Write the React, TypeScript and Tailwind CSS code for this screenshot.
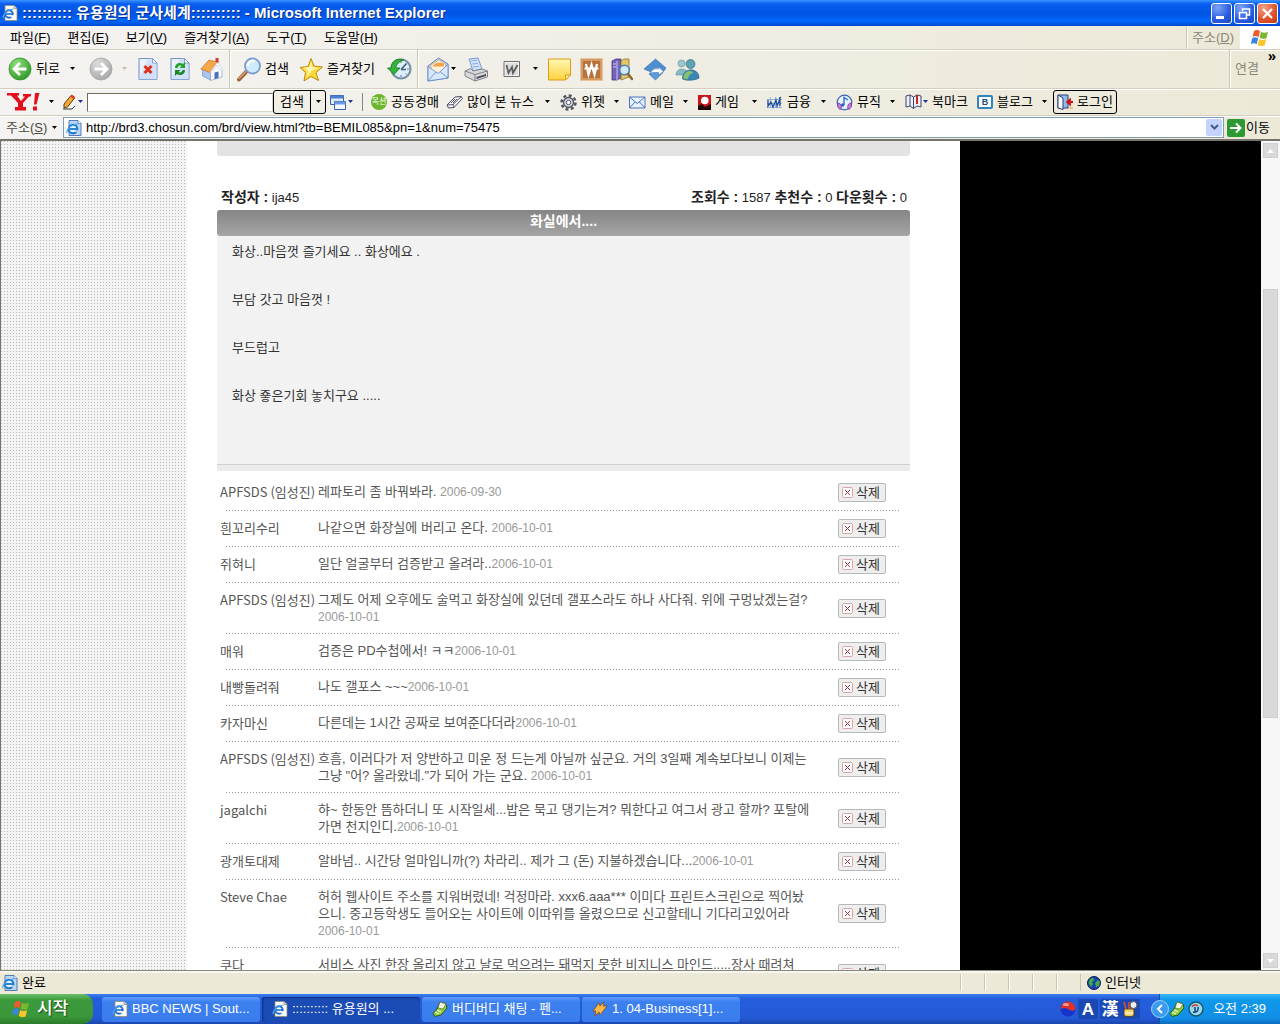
import React from "react";

type IconProps = { className?: string };

const Caret = ({ className = "text-black" }: IconProps) => (
  <svg width="7" height="4" viewBox="0 0 7 4" className={`shrink-0 ${className}`} aria-hidden="true">
    <path d="M1 0h5L3.500 3z" fill="currentColor" />
  </svg>
);

const IePage = ({ className = "size-4" }: IconProps) => (
  <svg viewBox="0 0 16 16" className={`shrink-0 ${className}`} aria-hidden="true">
    <path d="M3 .5h9l3 3v12H3z" fill="#fdfdf6" stroke="#8d8b78" strokeWidth=".8" />
    <path d="M12 .5v3h3" fill="#d8d6c6" stroke="#8d8b78" strokeWidth=".7" />
    <circle cx="7" cy="9" r="3.700" fill="none" stroke="#1f6fd6" strokeWidth="2" />
    <path d="M4 9h6.500" stroke="#1f6fd6" strokeWidth="1.600" />
    <path d="M8.500 10.200h4v2h-4z" fill="#fdfdf6" />
    <path d="M1.500 13C0 11 5 4.500 11.500 4" fill="none" stroke="#54a4ef" strokeWidth="1.200" />
  </svg>
);

const IeBlue = ({ className = "size-4" }: IconProps) => (
  <svg viewBox="0 0 16 16" className={`shrink-0 ${className}`} aria-hidden="true">
    <path d="M3 .5h9l3 3v12H3z" fill="#b9d6f7" stroke="#4870ad" strokeWidth=".9" />
    <path d="M12 .5v3h3" fill="#fff" stroke="#4870ad" strokeWidth=".7" />
    <circle cx="7" cy="9" r="4.300" fill="#e6f5ff" stroke="#1878cc" strokeWidth="2" />
    <path d="M3.500 9h7" stroke="#1878cc" strokeWidth="1.800" />
    <path d="M9 10.300h4v1.800H9z" fill="#b9d6f7" />
    <path d="M1 13C0 10 5 4 12 4" fill="none" stroke="#4aa3ec" strokeWidth="1.200" />
  </svg>
);

const ArrowDisc = ({ back, id, light, dark }: { back?: boolean; id: string; light: string; dark: string }) => (
  <svg width="24" height="24" viewBox="0 0 24 24" className="shrink-0" aria-hidden="true">
    <defs>
      <radialGradient id={id} cx=".35" cy=".25" r=".85">
        <stop offset="0" stopColor={light} />
        <stop offset="1" stopColor={dark} />
      </radialGradient>
    </defs>
    <circle cx="12" cy="12" r="11" fill={`url(#${id})`} stroke={dark} strokeWidth=".8" />
    <g transform={back ? undefined : "matrix(-1 0 0 1 24 0)"}>
      <path d="M18.500 12H7M12 6l-6 6 6 6" fill="none" stroke="#fff" strokeWidth="2.800" />
    </g>
  </svg>
);

const Doc = ({ children }: { children: React.ReactNode }) => (
  <svg width="20" height="24" viewBox="0 0 20 24" className="shrink-0" aria-hidden="true">
    <path d="M1 1.500h13.500L19 6v16.500H1z" fill="#e9f1fd" stroke="#6d8fcb" />
    <path d="M10 1.500h4.500L19 6v16.500H1z" fill="#c3d7f6" opacity=".6" />
    <path d="M14.500 1.500V6H19z" fill="#fff" stroke="#6d8fcb" strokeWidth=".8" />
    {children}
  </svg>
);

const Home = () => (
  <svg width="24" height="24" viewBox="0 0 24 24" className="shrink-0" aria-hidden="true">
    <path d="M2.500 12l8 2.500v8.500l-8-4z" fill="#a9c5f0" stroke="#6486c4" strokeWidth=".6" />
    <path d="M10.500 15L17 6.500l5 7V20l-11.500 3.500z" fill="#f7f9ff" stroke="#8297c8" strokeWidth=".6" />
    <path d="M14.500 15.500l4-1v6.500l-4 1.300z" fill="#4a71bd" />
    <path d="M.8 12L9 3l8.500 2L10 15.500z" fill="#f6a64a" stroke="#c8732a" strokeWidth=".7" />
    <path d="M17.500 5l6 8.500-1.500 1L17 8l-6 8-1-.8z" fill="#fff" stroke="#a9b4cd" strokeWidth=".5" />
    <path d="M15.500 1h3v5l-3-1.500z" fill="#cf3b2b" />
  </svg>
);

const Magnifier = () => (
  <svg width="25" height="25" viewBox="0 0 25 25" className="shrink-0" aria-hidden="true">
    <path d="M9.500 14.500l-7.500 8" stroke="#9a5f35" strokeWidth="4" strokeLinecap="round" />
    <path d="M9 14.500l-7 7" stroke="#d9a173" strokeWidth="1.500" strokeLinecap="round" />
    <circle cx="15.500" cy="9" r="7.500" fill="#cfeafc" stroke="#7b9bcf" strokeWidth="1.800" />
    <path d="M10.500 9a5.500 5.500 0 0 1 7-5" stroke="#fff" strokeWidth="2.500" fill="none" />
  </svg>
);

const Star = () => (
  <svg width="25" height="25" viewBox="0 0 25 25" className="shrink-0" aria-hidden="true">
    <path d="M12 1.500l3 7.500 8.500 1-6.500 5.500 2.500 8-7.500-4-7 4.500 1.500-8.500L1 10.500l8-1z" fill="#ffd83a" stroke="#b98a12" strokeWidth="1" strokeLinejoin="round" />
    <path d="M12 4l1.500 6 6 1-7 3-5 6 1.500-6-4-3.500 5.500-.5z" fill="#fff6b0" />
  </svg>
);

const History = () => (
  <svg width="25" height="24" viewBox="0 0 25 24" className="shrink-0" aria-hidden="true">
    <circle cx="14" cy="12" r="9.500" fill="#dceef9" stroke="#7c93a6" strokeWidth="2.200" />
    <path d="M14 12.500l5.500-6M14 12.500h5" stroke="#42607a" strokeWidth="1.600" />
    <path d="M14 4v2M22 12h-2M14 20v-2M19.500 17.500l-1-1" stroke="#5b7b95" />
    <path d="M17 3C10 .5 4.500 4 4 11H.5l6.500 6.500L13 11H9c0-3.500 3-6.500 8-8z" fill="#35b13d" stroke="#13771c" strokeWidth=".8" />
  </svg>
);

const MailOpen = () => (
  <svg width="24" height="25" viewBox="0 0 24 25" className="shrink-0" aria-hidden="true">
    <path d="M2 9L12.500 1 22 7v14L2 24z" fill="#bcd6f7" stroke="#5e88c7" />
    <path d="M5 8l8-5 6.500 4v7L12 17l-7-4z" fill="#fff3dc" stroke="#e0a765" strokeWidth=".8" />
    <path d="M7 8.500c3-3 7-4 11-2v3H7z" fill="#f4a14f" />
    <path d="M2 9.500l10 7 10-9V21L2 24z" fill="#d9e8fc" stroke="#5e88c7" strokeWidth=".8" />
    <path d="M2 24l8-9M22 21l-8-6.500" stroke="#5e88c7" strokeWidth=".8" />
  </svg>
);

const Printer = () => (
  <svg width="25" height="25" viewBox="0 0 25 25" className="shrink-0" aria-hidden="true">
    <path d="M5 2l9-1 4 11-9 2z" fill="#cfe2fb" stroke="#6e92cd" strokeWidth=".9" />
    <path d="M7 4l6-.7M8 7l6-.7M9 10l6-.7" stroke="#8faede" />
    <path d="M1 14l6-2.500 2 2.500 9-2 5.500 2v6L11 24 1 19z" fill="#d8d8dc" stroke="#77787f" strokeWidth=".9" />
    <path d="M1 14l10 3.500 12.500-3.500M11 17.500V24" fill="none" stroke="#77787f" strokeWidth=".9" />
    <path d="M12.500 20l9.500-3v2l-9.500 3z" fill="#4d4e55" />
  </svg>
);

const WordDoc = () => (
  <svg width="18" height="18" viewBox="0 0 18 18" className="shrink-0" aria-hidden="true">
    <path d="M1 1.500h15.500v15H1z" fill="#f5f5f5" stroke="#6f6f6f" />
    <path d="M2.500 3h12.500v12H2.500z" fill="#dedede" />
    <path d="M3.500 5l2 8 3.500-6 1 6 4.500-8" fill="none" stroke="#5e5e5e" strokeWidth="1.800" />
  </svg>
);

const Note = () => (
  <svg width="23" height="23" viewBox="0 0 23 23" className="shrink-0" aria-hidden="true">
    <defs>
      <linearGradient id="note" x1="0" y1="0" x2="0" y2="1">
        <stop offset="0" stopColor="#fff7b5" />
        <stop offset="1" stopColor="#ffd23e" />
      </linearGradient>
    </defs>
    <path d="M.5 1h22v16l-5 5H.5z" fill="url(#note)" stroke="#d99d17" />
    <path d="M22.500 17h-5v5z" fill="#fff2a0" stroke="#d99d17" />
  </svg>
);

const Won = () => (
  <svg width="23" height="23" viewBox="0 0 23 23" className="shrink-0" aria-hidden="true">
    <path d="M.5.5h22v22H.5z" fill="#d39a66" stroke="#e9c49c" />
    <path d="M3 3h17v17H3z" fill="#b8733c" />
    <path d="M6 6l2.500 10.500 3-10 3 10L17 6M4.500 10.500h14" fill="none" stroke="#fff" strokeWidth="2.200" />
  </svg>
);

const Books = () => (
  <svg width="22" height="23" viewBox="0 0 22 23" className="shrink-0" aria-hidden="true">
    <path d="M1 3l4-2h5v19l-4 2H1z" fill="#7463b8" stroke="#40357c" strokeWidth=".8" />
    <path d="M6 3v19M2 6h3M2 9h3" stroke="#cfc6f0" />
    <path d="M10 3l3-2 5 0v18l-8 3z" fill="#e5c766" stroke="#8d7428" strokeWidth=".8" />
    <circle cx="13.500" cy="12" r="4.800" fill="#cfe9fb" stroke="#4b7ebc" strokeWidth="1.600" />
    <path d="M17 16l4 5" stroke="#8a682d" strokeWidth="2.500" strokeLinecap="round" />
  </svg>
);

const Diamond = () => (
  <svg width="24" height="23" viewBox="0 0 24 23" className="shrink-0" aria-hidden="true">
    <path d="M12.500 1L23 10l-2.500 3.500L16 9l-5 1-3 4-7-3z" fill="#4f8fd0" stroke="#2f6caf" strokeWidth=".6" />
    <path d="M9 14l3-3h4v3.500h4L12.500 22 6 16z" fill="#5e9bd8" stroke="#2f6caf" strokeWidth=".6" />
    <path d="M7.500 15c1-3 4-5 8-4v-2l5 4.500-5 3.500v-2.500c-3 0-5 0-8 .5z" fill="#fff" stroke="#3c78bb" strokeWidth=".6" />
  </svg>
);

const People = () => (
  <svg width="25" height="23" viewBox="0 0 25 23" className="shrink-0" aria-hidden="true">
    <circle cx="6.500" cy="5.500" r="3.500" fill="#9cc6ce" stroke="#5f9099" strokeWidth=".6" />
    <path d="M1 17c0-8 12-8 12 0z" fill="#86b9c4" stroke="#5f9099" strokeWidth=".6" />
    <path d="M7.500 21c0-12 16.500-12 16.500-1-4 2.500-12 3-16.500 1z" fill="#3b86b4" stroke="#2a6389" strokeWidth=".7" />
    <path d="M8.500 20.500c0-8 7-9 10-6-3 1-5 3-6 7z" fill="#82c46f" />
    <circle cx="15.500" cy="6" r="4.500" fill="#5ea3b4" stroke="#336f86" strokeWidth=".7" />
  </svg>
);

const Yahoo = () => (
  <svg width="34" height="20" viewBox="0 0 34 20" className="shrink-0" aria-hidden="true">
    <path d="M0 1h12v2.500h-2l4 5.500 4-4.500h-2V2h8v2.500h-2L16 11v4h3v3.500H8V15h3v-4L4 3.500H0z" fill="#e3101b" />
    <path d="M28 1h4.500l-3 11.500h-2.500zM26 14.500h4v4h-4z" fill="#e3101b" />
  </svg>
);

const Pencil = () => (
  <svg width="15" height="16" viewBox="0 0 15 16" className="shrink-0" aria-hidden="true">
    <path d="M2 10l7-8.500 3.500 2.500-7 9L2 14z" fill="#f6a632" stroke="#5b3a10" />
    <path d="M9 1.500L12.500 4" stroke="#d83b2b" strokeWidth="2.500" />
    <path d="M1 15h9l3-3" stroke="#333" fill="none" />
  </svg>
);

const Panes = () => (
  <svg width="16" height="15" viewBox="0 0 16 15" className="shrink-0" aria-hidden="true">
    <path d="M.5.5h13v9H.5z" fill="#dfeafc" stroke="#3a62ad" />
    <path d="M.5.5h13v3H.5z" fill="#4f7fd3" />
    <path d="M4.500 6.500h11v8h-11z" fill="#f3f8ff" stroke="#3a62ad" />
    <path d="M4.500 6.500h11v3h-11z" fill="#6f9be4" />
  </svg>
);

const Auction = () => (
  <span className="flex size-4 shrink-0 items-center justify-center rounded-full bg-[#6cb52d] text-[8px] leading-none text-white">옥션</span>
);

const Eraser = () => (
  <svg width="17" height="15" viewBox="0 0 17 15" className="shrink-0" aria-hidden="true">
    <path d="M1 10l8-8 6-.5 1.500 2-8.500 9-5.500.5z" fill="#f1f1f6" stroke="#4d4d63" />
    <path d="M1 10l6-.5 8.500-8M7 9.500l1 3M5 8l4-4M7 8l4-4" fill="none" stroke="#4d4d63" strokeWidth=".9" />
  </svg>
);

const Gear = () => (
  <svg width="17" height="17" viewBox="0 0 17 17" className="shrink-0" aria-hidden="true">
    <circle cx="8.500" cy="8.500" r="7" fill="none" stroke="#50565f" strokeWidth="2.500" strokeDasharray="3 2.500" />
    <circle cx="8.500" cy="8.500" r="5" fill="#cfd6dd" stroke="#50565f" strokeWidth="1.300" />
    <circle cx="8.500" cy="8.500" r="2.200" fill="#fff" stroke="#50565f" />
  </svg>
);

const Envelope = () => (
  <svg width="17" height="13" viewBox="0 0 17 13" className="shrink-0" aria-hidden="true">
    <path d="M.5 1h15.500v11H.5z" fill="#e8f2ff" stroke="#4a73c0" />
    <path d="M.5 1l7.700 6.500L16 1M.5 12L6 6M16 12l-5.500-6" fill="none" stroke="#4a73c0" />
  </svg>
);

const Game = () => (
  <svg width="13" height="15" viewBox="0 0 13 15" className="shrink-0" aria-hidden="true">
    <path d="M0 0h13v15H0z" fill="#c8141e" />
    <path d="M0 15v-4l4-2 3 3 6-3v6z" fill="#200505" />
    <circle cx="6.800" cy="5.500" r="3.800" fill="#fff" />
  </svg>
);

const Finance = () => (
  <svg width="16" height="13" viewBox="0 0 16 13" className="shrink-0" aria-hidden="true">
    <path d="M0 3.500h15M0 7.500h15M0 11.500h15M3.500 1v11M8.500 1v11M12.500 1v11" stroke="#8fb3dd" />
    <path d="M1 4v6l3-4 2 5 3-7 1 6 3-7v7M12 3l2-2" fill="none" stroke="#1d4e9c" strokeWidth="1.300" />
  </svg>
);

const Music = () => (
  <svg width="17" height="17" viewBox="0 0 17 17" className="shrink-0" aria-hidden="true">
    <circle cx="8.500" cy="8.500" r="7.300" fill="#eaf2ff" stroke="#3d62b8" strokeWidth="1.200" />
    <path d="M8 11V3.500l4 2.500" fill="none" stroke="#1c66c9" strokeWidth="1.300" />
    <circle cx="6.700" cy="11" r="1.700" fill="#1c66c9" />
    <path d="M2 9c4 0 4 6 2 6.500C2 14 1 12 2 9zM15 9c-4 0-4 6-2 6.500 2-1.500 3-3.500 2-6.500z" fill="#c47be0" stroke="#7634a0" strokeWidth=".8" />
  </svg>
);

const Bookmark = () => (
  <svg width="17" height="16" viewBox="0 0 17 16" className="shrink-0" aria-hidden="true">
    <path d="M1 2l4-1 3.500 2L12 1l4 1v11l-4-1-3.500 2.500L5 12l-4 1z" fill="#eef1f8" stroke="#3a4570" />
    <path d="M8.500 3v11.500M5 1v11" stroke="#3a4570" />
    <path d="M12 1v9" stroke="#c8261f" strokeWidth="2" />
  </svg>
);

const Blog = () => (
  <span className="flex h-[14px] w-4 shrink-0 items-center justify-center rounded-[2px] border-2 border-[#2f86bf] bg-white text-[9px] leading-none font-bold text-[#1d4f7c]">B</span>
);

const Door = () => (
  <svg width="17" height="16" viewBox="0 0 17 16" className="shrink-0" aria-hidden="true">
    <path d="M1 1h10v13H1z" fill="#8ebdf0" stroke="#2c3f77" />
    <path d="M1 1l5 3v11.500L1 14z" fill="#fff" stroke="#2c3f77" />
    <path d="M16 8h-4M13 5.500L10 8l3 2.500z" stroke="#d21414" strokeWidth="1.800" fill="#d21414" />
    <path d="M11 14h5" stroke="#d8a14c" />
  </svg>
);

const WindowsFlag = ({ className = "h-[18px] w-5" }: IconProps) => (
  <svg viewBox="0 0 20 18" className={`shrink-0 ${className}`} aria-hidden="true">
    <path d="M4 2c2-1.500 4-1.500 6 .2L8.500 8.200c-2-1.500-4-1.500-6-.2z" fill="#f0592a" />
    <path d="M11 2.700c2 1.300 4.500 1.500 7 0L16.500 9c-2.500 1.300-4.800 1-7-.2z" fill="#77b82f" />
    <path d="M2.200 9.200c2-1.400 4-1.400 6 0L6.700 15.300c-2-1.500-4-1.300-6 0z" fill="#3a86dd" />
    <path d="M9.200 9.900c2 1.300 4.500 1.500 7 0l-1.500 6.300c-2.500 1.300-5 1-7-.3z" fill="#fbc62a" />
  </svg>
);

const Globe = () => (
  <svg width="14" height="14" viewBox="0 0 14 14" className="shrink-0" aria-hidden="true">
    <circle cx="7" cy="7" r="6.500" fill="#1b3fae" stroke="#0b1c55" />
    <path d="M3 3l3-1.500L7.500 4 5 6l1 2-2 3-2.500-4zM8 7l3-3 2 2-1 4-3 1z" fill="#3fae4a" />
  </svg>
);

const Shoe = () => (
  <svg width="16" height="16" viewBox="0 0 16 16" className="shrink-0" aria-hidden="true">
    <path d="M8 1l6 2 1 4-6 7-6 1.500-2-3L5 8z" fill="#8fce3a" stroke="#2f5a10" />
    <path d="M8 1l6 2-3 5-5-1z" fill="#f3f7e4" stroke="#56703a" strokeWidth=".7" />
    <path d="M3 11l4 2M5 9l4 2" stroke="#fff" />
  </svg>
);

const Bolt = () => (
  <svg width="16" height="16" viewBox="0 0 16 16" className="shrink-0" aria-hidden="true">
    <path d="M1 10l6-8 1 3 4-4-1 4 4 0-7 9-1-3-4 4 1-5z" fill="#ffb84a" stroke="#8d4a0a" strokeWidth=".8" />
  </svg>
);

const UI_FONT = "font-['Liberation_Sans','Noto_Sans_CJK_KR',sans-serif]";

const menus: [string, string][] = [
  ["파일", "F"],
  ["편집", "E"],
  ["보기", "V"],
  ["즐겨찾기", "A"],
  ["도구", "T"],
  ["도움말", "H"],
];

const links: { icon: React.ReactNode; label: string; width: string; caret: boolean }[] = [
  { icon: <Auction />, label: "공동경매", width: "w-[75px]", caret: false },
  { icon: <Eraser />, label: "많이 본 뉴스", width: "w-[114px]", caret: true },
  { icon: <Gear />, label: "위젯", width: "w-[69px]", caret: true },
  { icon: <Envelope />, label: "메일", width: "w-[69px]", caret: true },
  { icon: <Game />, label: "게임", width: "w-[69px]", caret: true },
  { icon: <Finance />, label: "금융", width: "w-[69px]", caret: true },
  { icon: <Music />, label: "뮤직", width: "w-[69px]", caret: true },
];

const comments: { name: string; lines: string[]; date?: string; dateBelow?: boolean }[] = [
  { name: "APFSDS (임성진)", lines: ["레파토리 좀 바꿔봐라. "], date: "2006-09-30" },
  { name: "흰꼬리수리", lines: ["나같으면 화장실에 버리고 온다. "], date: "2006-10-01" },
  { name: "쥐혀니", lines: ["일단 얼굴부터 검증받고 올려라.."], date: "2006-10-01" },
  { name: "APFSDS (임성진)", lines: ["그제도 어제 오후에도 술먹고 화장실에 있던데 갤포스라도 하나 사다줘. 위에 구멍났겠는걸?"], date: "2006-10-01", dateBelow: true },
  { name: "매워", lines: ["검증은 PD수첩에서! ㅋㅋ"], date: "2006-10-01" },
  { name: "내빵돌려줘", lines: ["나도 갤포스 ~~~"], date: "2006-10-01" },
  { name: "카자마신", lines: ["다른데는 1시간 공짜로 보여준다더라"], date: "2006-10-01" },
  { name: "APFSDS (임성진)", lines: ["흐흠, 이러다가 저 양반하고 미운 정 드는게 아닐까 싶군요. 거의 3일째 계속보다보니 이제는", "그냥 \"어? 올라왔네.\"가 되어 가는 군요. "], date: "2006-10-01" },
  { name: "jagalchi", lines: ["햐~ 한동안 뜸하더니 또 시작일세...밥은 묵고 댕기는겨? 뭐한다고 여그서 광고 할까? 포탈에", "가면 천지인디."], date: "2006-10-01" },
  { name: "광개토대제", lines: ["알바넘.. 시간당 얼마입니까(?) 차라리.. 제가 그 (돈) 지불하겠습니다..."], date: "2006-10-01" },
  { name: "Steve Chae", lines: ["허허 웹사이트 주소를 지워버렸네! 걱정마라. xxx6.aaa*** 이미다 프린트스크린으로 찍어놨", "으니. 중고등학생도 들어오는 사이트에 이따위를 올렸으므로 신고할테니 기다리고있어라"], date: "2006-10-01", dateBelow: true },
  { name: "쿠다", lines: ["서비스 사진 한장 올리지 않고 날로 먹으려는 돼먹지 못한 비지니스 마인드.....장사 때려쳐", "\u00a0"] },
];

const Rule = () => <div className="h-full w-[2px] shrink-0 border-r border-l border-r-white border-l-[#cbc7b4]" />;

function TitleBar() {
  return (
    <header className="flex h-[26px] shrink-0 items-center bg-[linear-gradient(#3a93ff,#0a5ef0_15%,#0054e3_55%,#0468ff_80%,#0048cf)] pr-[2px] pl-[2px]">
      <IePage />
      <h1 className="ml-1 flex-1 truncate text-[15px] leading-5 font-bold text-white [text-shadow:1px_1px_0_#0b2f8a]">
        :::::::::: 유용원의 군사세계:::::::::: - Microsoft Internet Explorer
      </h1>
      <div className="flex gap-[2px]">
        <button aria-label="최소화" className="flex size-[21px] items-end rounded-[3px] border border-white bg-[radial-gradient(circle_at_30%_20%,#7ea4f5,#2a5be0_60%,#1c48c4)] pb-[4px] pl-1">
          <span className="h-[3px] w-2 bg-white" />
        </button>
        <button aria-label="이전 크기로" className="flex size-[21px] items-center justify-center rounded-[3px] border border-white bg-[radial-gradient(circle_at_30%_20%,#7ea4f5,#2a5be0_60%,#1c48c4)]">
          <svg width="13" height="13" viewBox="0 0 13 13" aria-hidden="true">
            <path d="M4.500 4V2h7v6H9" fill="none" stroke="#fff" strokeWidth="1.500" />
            <path d="M1.500 5.500h7v6h-7z" fill="none" stroke="#fff" strokeWidth="1.500" />
          </svg>
        </button>
        <button aria-label="닫기" className="flex size-[21px] items-center justify-center rounded-[3px] border border-white bg-[radial-gradient(circle_at_30%_20%,#f3a088,#e0502b_60%,#c23a17)]">
          <svg width="13" height="13" viewBox="0 0 13 13" aria-hidden="true">
            <path d="M2 2l9 9M11 2l-9 9" stroke="#fff" strokeWidth="2.200" />
          </svg>
        </button>
      </div>
    </header>
  );
}

function MenuBar() {
  return (
    <nav className="flex h-[23px] shrink-0 items-stretch">
      <div className="flex flex-1 items-center gap-[17px] pl-[10px]">
        {menus.map(([label, key]) => (
          <button key={key} className="whitespace-nowrap">
            {label}(<u>{key}</u>)
          </button>
        ))}
      </div>
      <Rule />
      <div className="flex w-[52px] items-center pl-1 whitespace-nowrap text-[#8a8776]">
        주소(<u>D</u>)
      </div>
      <div className="flex w-10 items-center justify-center bg-white">
        <WindowsFlag />
      </div>
    </nav>
  );
}

function ToolBar() {
  return (
    <div className="flex h-[39px] shrink-0 items-center border-t border-[#d2cfbf] pl-2 shadow-[inset_0_1px_0_#fff]">
      <button className="flex w-[81px] items-center gap-1">
        <ArrowDisc back id="disc-back" light="#8fe07a" dark="#2a9324" />
        <span>뒤로</span>
        <Caret className="ml-[5px] text-black" />
      </button>
      <button aria-label="앞으로" className="flex w-[49px] items-center gap-2">
        <ArrowDisc id="disc-next" light="#dcdcdc" dark="#a4a4a4" />
        <Caret className="text-[#c0bdb0]" />
      </button>
      <button aria-label="중지" className="w-8">
        <Doc>
          <path d="M6.500 9l7 7M13.500 9l-7 7" stroke="#e0301e" strokeWidth="3" />
        </Doc>
      </button>
      <button aria-label="새로 고침" className="w-[30px]">
        <Doc>
          <path d="M5 11c0-5 5-6 8-4l2-2v6H9.500l2-2c-2-1-3.500 0-4 2z" fill="#27a32c" />
          <path d="M15 13c0 5-5 6-8 4l-2 2v-6h5.500l-2 2c2 1 3.500 0 4-2z" fill="#1c8a22" />
        </Doc>
      </button>
      <button aria-label="홈" className="w-[29px]">
        <Home />
      </button>
      <Rule />
      <button className="ml-[6px] flex w-[62px] items-center gap-[3px]">
        <Magnifier />
        <span>검색</span>
      </button>
      <button className="flex w-[88px] items-center gap-[3px]">
        <Star />
        <span>즐겨찾기</span>
      </button>
      <button aria-label="열어 본 페이지" className="w-[30px]">
        <History />
      </button>
      <Rule />
      <button aria-label="메일" className="ml-[7px] flex w-[38px] items-center">
        <MailOpen />
        <Caret />
      </button>
      <button aria-label="인쇄" className="w-[39px]">
        <Printer />
      </button>
      <button aria-label="편집" className="flex w-[45px] items-center gap-[11px]">
        <WordDoc />
        <Caret />
      </button>
      <button aria-label="메모" className="w-8">
        <Note />
      </button>
      <button aria-label="가격" className="w-[31px]">
        <Won />
      </button>
      <button aria-label="리서치" className="w-8">
        <Books />
      </button>
      <button aria-label="번역" className="w-8">
        <Diamond />
      </button>
      <button aria-label="메신저">
        <People />
      </button>
      <div className="flex-1" />
      <Rule />
      <div className="flex h-full w-[49px] justify-between pr-1 pl-1 text-[#8a8776]">
        <span className="self-center">연결</span>
        <span className="text-[15px] leading-3 font-bold text-black">»</span>
      </div>
    </div>
  );
}

function SearchBar() {
  return (
    <div className="flex h-[27px] shrink-0 items-center border-t border-[#d2cfbf] pl-[7px] shadow-[inset_0_1px_0_#fff]">
      <button aria-label="야후" className="flex w-[55px] items-center gap-[7px]">
        <Yahoo />
        <Caret />
      </button>
      <button aria-label="강조" className="flex w-[25px] items-center">
        <Pencil />
        <Caret className="text-[#1c2f9a]" />
      </button>
      <input aria-label="검색어" className="h-[19px] w-[186px] border border-[#d8d5c7] border-t-[#6d6b60] border-l-[#6d6b60] bg-white px-1 outline-none" />
      <div className="flex h-6 w-[53px] items-stretch rounded-[3px] border border-black bg-[#f2f0e6]">
        <button className="flex-1 border-r border-black">검색</button>
        <button aria-label="검색 옵션" className="flex w-[14px] items-center justify-center">
          <Caret />
        </button>
      </div>
      <button aria-label="팝업" className="mr-[7px] ml-[4px] flex w-[25px] items-center gap-[1px]">
        <Panes />
        <Caret className="text-[#1c2f9a]" />
      </button>
      <div className="mr-2 h-[18px] w-px bg-[#8b887a]" />
      {links.map((l) => (
        <button key={l.label} className={`flex shrink-0 items-center gap-1 whitespace-nowrap ${l.width}`}>
          {l.icon}
          <span>{l.label}</span>
          {l.caret && <Caret className="mr-[9px] ml-auto text-black" />}
        </button>
      ))}
      <button className="flex w-[72px] shrink-0 items-center whitespace-nowrap">
        <Bookmark />
        <Caret className="text-[#1c2f9a]" />
        <span className="ml-[3px]">북마크</span>
      </button>
      <button className="flex w-[76px] shrink-0 items-center gap-1 whitespace-nowrap">
        <Blog />
        <span>블로그</span>
        <Caret className="mr-[5px] ml-auto text-black" />
      </button>
      <button className="flex h-6 w-[64px] shrink-0 items-center gap-[3px] rounded-[3px] border border-black pl-[3px] whitespace-nowrap">
        <Door />
        <span>로그인</span>
      </button>
    </div>
  );
}

function AddressBar() {
  return (
    <div className="flex h-[24px] shrink-0 items-center border-t border-[#d2cfbf] pr-[10px] pl-[6px] shadow-[inset_0_1px_0_#fff]">
      <label htmlFor="address" className="flex w-[57px] items-center gap-1 whitespace-nowrap text-[#4c4a40]">
        <span>
          주소(<u>S</u>)
        </span>
        <Caret />
      </label>
      <div className="flex h-[21px] flex-1 items-center border border-[#7f9db9] bg-white pl-[2px]">
        <IeBlue />
        <input
          id="address"
          defaultValue="http://brd3.chosun.com/brd/view.html?tb=BEMIL085&pn=1&num=75475"
          className="ml-1 min-w-0 flex-1 bg-transparent text-[13px] outline-none"
        />
        <button aria-label="주소 목록" className="mr-px flex h-[17px] w-4 items-center justify-center rounded-[2px] bg-[#c3d3fd]">
          <svg width="9" height="7" viewBox="0 0 9 7" aria-hidden="true">
            <path d="M1 1l3.500 3.500L8 1" fill="none" stroke="#3f5a8c" strokeWidth="2" />
          </svg>
        </button>
      </div>
      <button className="ml-[3px] flex items-center gap-[1px] whitespace-nowrap">
        <svg width="18" height="18" viewBox="0 0 18 18" aria-hidden="true">
          <rect width="18" height="18" rx="2" fill="#2c9a32" />
          <path d="M3 9h10M9 4.500L13.500 9 9 13.500" fill="none" stroke="#fff" strokeWidth="2" />
        </svg>
        <span>이동</span>
      </button>
    </div>
  );
}

function DeleteButton() {
  return (
    <button className="flex h-[19px] w-12 items-center gap-[3px] self-center rounded-[2px] border border-[#b4b9b9] bg-[#eeeeee] pl-[3px] whitespace-nowrap text-[#333]">
      <svg width="11" height="11" viewBox="0 0 11 11" className="shrink-0" aria-hidden="true">
        <rect x=".5" y=".5" width="10" height="10" rx="1" fill="#fff" stroke="#d7a5a5" />
        <path d="M3 3l5 5M8 3L3 8" stroke="#a8323e" />
      </svg>
      <span>삭제</span>
    </button>
  );
}

function Article() {
  return (
    <article className="w-[693px]">
      <div className="h-[15px] rounded-b-[3px] bg-[#e3e3e3]" />
      <div className="mt-[33px] flex h-[21px] items-start justify-between pr-[3px] pl-1 leading-[17px] text-[#222]">
        <p>
          <b className="text-[14px]">작성자 :</b> ija45
        </p>
        <p>
          <b className="text-[14px]">조회수 :</b> 1587 <b className="text-[14px]">추천수 :</b> 0 <b className="text-[14px]">다운횟수 :</b> 0
        </p>
      </div>
      <h2 className="h-[26px] rounded-[3px] bg-[linear-gradient(#858585,#a5a5a5)] text-center text-[14px] leading-[23px] font-bold text-white">화실에서....</h2>
      <div className="h-[228px] bg-[#f2f2f2] px-[15px] pt-1 leading-6 text-[#333]">
        <p className="mb-6">화상..마음껏 즐기세요 .. 화상에요 .</p>
        <p className="mb-6">부담 갓고 마음껏 !</p>
        <p className="mb-6">부드럽고</p>
        <p>화상 죻은기회 놓치구요 .....</p>
      </div>
      <div className="h-[7px] border-t border-[#cfcfcf] bg-[#ebebeb]" />
      <ul className="pt-1 leading-[17px] text-[#555]">
        {comments.map((c, i) => (
          <li key={i}>
            <div className="grid grid-cols-[98px_520px_48px] items-start py-2 pl-[3px]">
              <span className="font-['Noto_Sans_CJK_KR',sans-serif] whitespace-nowrap">{c.name}</span>
              <p className="whitespace-nowrap">
                {c.lines.map((line, n) => (
                  <React.Fragment key={n}>
                    {n > 0 && <br />}
                    {line}
                  </React.Fragment>
                ))}
                {c.dateBelow && <br />}
                {c.date && <time className="text-[12px] leading-none text-[#999]">{c.date}</time>}
              </p>
              <DeleteButton />
            </div>
            <div className="mr-[10px] ml-[9px] h-px bg-[repeating-linear-gradient(90deg,#999_0_1px,transparent_1px_3px)]" />
          </li>
        ))}
      </ul>
    </article>
  );
}

function Scrollbar() {
  return (
    <div className="flex w-[19px] shrink-0 flex-col items-center bg-[#f7f7f7] py-[2px]">
      <button aria-label="위로" className="flex h-[15px] w-[15px] shrink-0 items-center justify-center border border-[#cfcfcf] bg-[#d9d9d9]">
        <svg width="7" height="4" viewBox="0 0 7 4" aria-hidden="true">
          <path d="M0 4L3.500 0 7 4z" fill="#fff" />
        </svg>
      </button>
      <div className="flex w-[15px] flex-1 flex-col">
        <div className="grow-[131]" />
        <div className="grow-[429] border border-[#cfcfcf] bg-[#d9d9d9]" />
        <div className="grow-[236]" />
      </div>
      <button aria-label="아래로" className="flex h-[15px] w-[15px] shrink-0 items-center justify-center border border-[#cfcfcf] bg-[#d9d9d9]">
        <svg width="7" height="4" viewBox="0 0 7 4" aria-hidden="true">
          <path d="M0 0h7L3.500 4z" fill="#fff" />
        </svg>
      </button>
    </div>
  );
}

function StatusBar() {
  return (
    <footer className="flex h-[24px] shrink-0 items-center border-t border-[#8b887a] bg-[#ece9d8] pl-[2px] shadow-[inset_0_2px_0_#f7f6ef]">
      <IeBlue />
      <span className="ml-1 flex-1">완료</span>
      <div className="flex h-[17px] items-stretch">
        {[0, 1, 2, 3, 4].map((n) => (
          <div key={n} className="w-6 border-l border-[#c9c5b2] shadow-[inset_1px_0_0_#fff]" />
        ))}
        <div className="flex w-[200px] items-center gap-1 border-l border-[#c9c5b2] pl-[6px]">
          <Globe />
          <span>인터넷</span>
        </div>
      </div>
    </footer>
  );
}

function TaskBar() {
  const tasks = [
    { icon: <IePage />, label: "BBC NEWS | Sout...", active: false },
    { icon: <IePage />, label: ":::::::::: 유용원의 ...", active: true },
    { icon: <Shoe />, label: "버디버디 채팅 - 펜...", active: false },
    { icon: <Bolt />, label: "1. 04-Business[1]...", active: false },
  ];
  return (
    <footer className="flex h-[30px] shrink-0 items-stretch bg-[linear-gradient(#3b7ff0,#245edc_15%,#2459d6_80%,#1a45ad)] text-white">
      <button className="flex w-[93px] items-center gap-[6px] rounded-r-[10px] bg-[linear-gradient(#6cc06a,#3c9a3c_20%,#3a973a_75%,#2a7a2a)] pl-[11px] text-[17px] font-medium [text-shadow:1px_1px_1px_#1d4f1d]">
        <WindowsFlag className="h-[18px] w-5" />
        시작
      </button>
      <div className="ml-[9px] flex flex-1 items-center gap-[2px]">
        {tasks.map((t) => (
          <button
            key={t.label}
            className={
              t.active
                ? "flex h-[25px] w-[158px] items-center gap-1 rounded-[3px] bg-[#1b4bb4] pl-[10px] whitespace-nowrap shadow-[inset_1px_1px_2px_#0e2f80]"
                : "flex h-[25px] w-[158px] items-center gap-1 rounded-[3px] bg-[linear-gradient(#5c9bff,#3c80f0_20%,#3a7cec)] pl-[10px] whitespace-nowrap"
            }
          >
            {t.icon}
            <span>{t.label}</span>
          </button>
        ))}
      </div>
      <div className="flex shrink-0 items-center gap-[2px] pr-[19px]">
        <svg width="16" height="16" viewBox="0 0 16 16" className="shrink-0" aria-hidden="true">
          <circle cx="8" cy="8" r="7.500" fill="#1733c9" />
          <path d="M.5 8a7.500 7.500 0 0 1 15 0C13 11 10.500 9.500 8 8S3 6.500.5 8z" fill="#e0322d" />
          <ellipse cx="6" cy="3.500" rx="3" ry="1.500" fill="#f79a92" />
        </svg>
        <button className="flex h-5 w-5 items-center justify-center rounded-[2px] bg-[#1b49b4] text-[17px] leading-none font-bold">A</button>
        <button className="flex h-5 w-5 items-center justify-center rounded-[2px] bg-[#1b49b4] text-[17px] leading-none font-bold">漢</button>
        <button aria-label="입력기 도구" className="-ml-[2px] flex h-5 w-5 items-center justify-center rounded-[2px] bg-[#1b49b4]">
          <svg width="18" height="18" viewBox="0 0 18 18" aria-hidden="true">
            <path d="M3 9h10v6c0 2-10 2-10 0z" fill="#f3d36b" stroke="#3d2c0a" strokeWidth=".8" />
            <path d="M5 9L3 2M8 9V2M10 9l2-4" stroke="#d9532c" strokeWidth="1.600" />
            <circle cx="12.500" cy="5" r="3.500" fill="#eef" stroke="#555" />
            <path d="M4 13h8" stroke="#fff" />
          </svg>
        </button>
      </div>
      <div className="flex w-[121px] shrink-0 items-center bg-[linear-gradient(#37b6f8,#0f98ea_20%,#128fe6_80%,#0c6cc0)] shadow-[inset_1px_0_0_#0b4fa8]">
        <button aria-label="숨겨진 아이콘 표시" className="-ml-2">
          <svg width="18" height="18" viewBox="0 0 18 18" aria-hidden="true">
            <circle cx="9" cy="9" r="8.500" fill="#3b9bf0" stroke="#9bd0fb" />
            <path d="M11 5L7 9l4 4" fill="none" stroke="#fff" strokeWidth="2" />
          </svg>
        </button>
        <Shoe />
        <svg width="16" height="16" viewBox="0 0 16 16" className="ml-[3px] shrink-0" aria-hidden="true">
          <circle cx="8" cy="8" r="7" fill="#9adbe6" stroke="#155a74" strokeWidth="1.500" />
          <path d="M5 11c4 1 6-2 5-5M7 11V6" fill="none" stroke="#173f8c" strokeWidth="1.500" />
          <path d="M4 6c1-2 4-3 6-1" fill="none" stroke="#d8392f" strokeWidth="1.500" />
        </svg>
        <span className="ml-auto pr-[14px] whitespace-nowrap">오전 2:39</span>
      </div>
    </footer>
  );
}

export default function App() {
  return (
    <div className={`flex h-screen flex-col overflow-hidden text-[13px] leading-4 text-black ${UI_FONT}`}>
      <TitleBar />
      <div className="shrink-0 border-b-2 border-[#77756b] bg-[linear-gradient(90deg,#f4f3f1,#ece9d8)]">
        <MenuBar />
        <ToolBar />
        <SearchBar />
        <AddressBar />
      </div>
      <main className="flex min-h-0 flex-1 overflow-hidden">
        <div className="w-[187px] shrink-0 border-l border-[#77756b] bg-[repeating-linear-gradient(90deg,transparent_0_1px,#f3f3f3_1px_3px),repeating-linear-gradient(#b8b8b8_0_1px,#f3f3f3_1px_3px)]" />
        <div className="w-[773px] shrink-0 overflow-hidden bg-white pl-[30px]">
          <Article />
        </div>
        <div className="flex-1 bg-black" />
        <Scrollbar />
      </main>
      <StatusBar />
      <TaskBar />
    </div>
  );
}
